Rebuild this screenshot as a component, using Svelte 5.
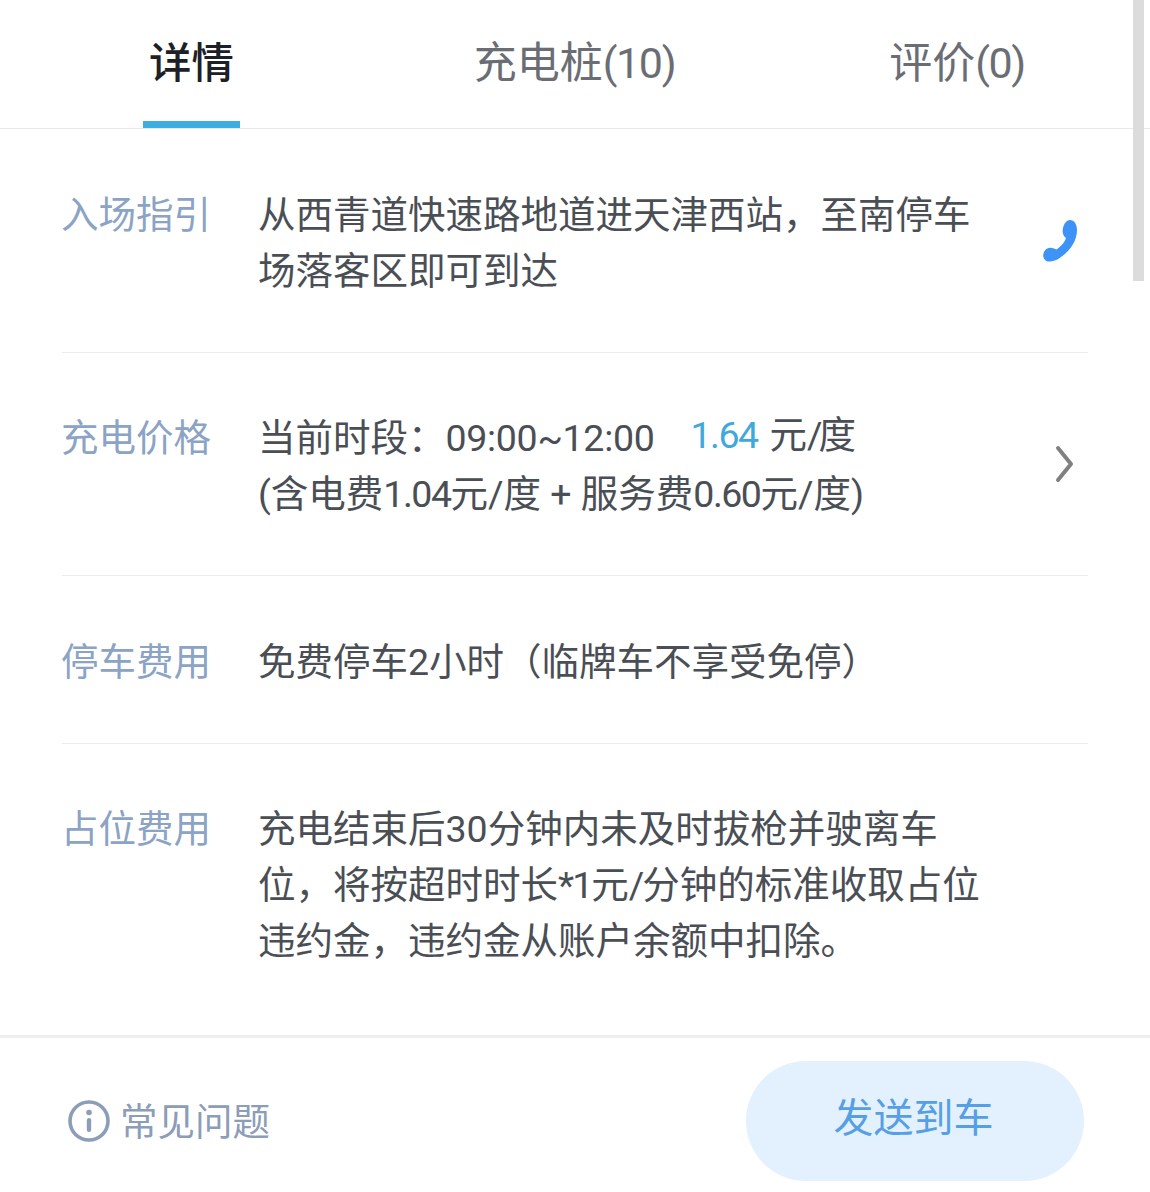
<script>
  const tabs = [
    { label: '详情', active: true },
    { label: '充电桩', count: '(10)' },
    { label: '评价', count: '(0)' }
  ];
</script>

<div class="page">
  <nav class="tabs">
    {#each tabs as t}
      <div class="tab" class:active={t.active}>
        <span>{t.label}{#if t.count}<span class="num">{t.count}</span>{/if}</span>
        {#if t.active}<i class="ink"></i>{/if}
      </div>
    {/each}
  </nav>

  <main class="list">
    <section class="row r1">
      <div class="label">入场指引</div>
      <div class="value">从西青道快速路地道进天津西站，至南停车<br />场落客区即可到达</div>
      <svg class="phone" viewBox="0 0 36 44" width="36" height="44" aria-hidden="true">
        <path d="M28 1 C32 1 35 5 35 11 C35 22 28 32 19 38 C14 42 9 43 6 42.5 C2 42 0 37 2 33 C4 29 8 28 12 29.5 L14.5 30.5 C18 28 22.5 24 24 19 C21 17 20 13 21 9 C22 4 25 1 28 1 Z" fill="#3d94f6" />
      </svg>
    </section>

    <section class="row r2">
      <div class="label">充电价格</div>
      <div class="value">
        <div class="price-line">当前时段：<span class="time">09:00~12:00</span><b class="price">1.64</b><span class="unit">元<span class="slash">/</span>度</span></div>
        <div>(含电费<span class="num">1.04</span>元/度 + 服务费<span class="num">0.60</span>元/度)</div>
      </div>
      <svg class="chev" viewBox="0 0 20 38" width="20" height="38" aria-hidden="true">
        <path d="M4 3 L17 19 L4 35" fill="none" stroke="#808080" stroke-width="4" stroke-linecap="round" stroke-linejoin="round" />
      </svg>
    </section>

    <section class="row r3">
      <div class="label">停车费用</div>
      <div class="value">免费停车2小时（临牌车不享受免停）</div>
    </section>

    <section class="row r4">
      <div class="label">占位费用</div>
      <div class="value">充电结束后30分钟内未及时拔枪并驶离车<br />位，将按超时时长<span class="tight">*1</span>元<span class="tight">/</span>分钟的标准收取占位<br />违约金，违约金从账户余额中扣除。</div>
    </section>
  </main>

  <footer class="foot">
    <div class="faq">
      <svg viewBox="0 0 42 42" width="42" height="42" aria-hidden="true">
        <circle cx="21" cy="21" r="19" fill="none" stroke="#8c9db8" stroke-width="3.6" />
        <circle cx="21" cy="12.5" r="2.8" fill="#8c9db8" />
        <rect x="18.8" y="18" width="4.4" height="14" rx="2.2" fill="#8c9db8" />
      </svg>
      <span class="faq-text">常见问题</span>
    </div>
    <button class="send">发送到车</button>
  </footer>

  <div class="scroll"></div>
</div>

<style>
  :global(body) {
    margin: 0;
    background: #fff;
  }
  .page {
    position: relative;
    width: 1150px;
    height: 1192px;
    overflow: hidden;
    background: #fff;
    font-family: Roboto, "Noto Sans CJK SC", "Noto Sans", sans-serif;
    color: #4a4e55;
  }
  .tabs {
    display: grid;
    grid-template-columns: 383px 383px 382px;
    height: 128px;
    border-bottom: 1px solid #e8e8e8;
  }
  .tab {
    position: relative;
    display: flex;
    align-items: center;
    justify-content: center;
    font-size: 43px;
    color: #6a6e74;
    padding-bottom: 10px;
    box-sizing: border-box;
  }
  .tab .num {
    letter-spacing: -1.4px;
  }
  .tab.active {
    color: #1d2026;
    font-size: 42.4px;
    font-weight: 500;
  }
  .ink {
    position: absolute;
    left: 143px;
    bottom: 0;
    width: 97px;
    height: 7px;
    background: #3badE0;
  }
  .list {
    padding: 0 62px;
  }
  .row {
    position: relative;
    display: flex;
    border-bottom: 1px solid #ececec;
    font-size: 37.5px;
    line-height: 56px;
    width: 1026px;
    box-sizing: border-box;
  }
  .r1 { height: 224px; padding-top: 58px; }
  .r2 { height: 223px; padding-top: 57px; }
  .r3 { height: 168px; padding-top: 58px; }
  .r4 { height: 291px; padding-top: 57px; border-bottom: 0; }
  .label {
    width: 196px;
    flex: none;
    margin-left: -1px;
    margin-right: 1px;
    color: #8ba3c4;
  }
  .value {
    white-space: nowrap;
    color: #4a4e55;
  }
  .num {
    letter-spacing: -1.5px;
  }
  .tight {
    letter-spacing: -2px;
  }
  .time {
    letter-spacing: -0.3px;
  }
  .slash {
    letter-spacing: -4px;
  }
  .price-line {
    display: flex;
    height: 56px;
  }
  .price {
    font-weight: 400;
    color: #3fa9dc;
    margin: -3px 0 0 36px;
    letter-spacing: -1.5px;
  }
  .unit {
    margin: -3px 0 0 12px;
  }
  .phone {
    position: absolute;
    right: 10px;
    top: 90px;
  }
  .chev {
    position: absolute;
    right: 14px;
    top: 92px;
  }
  .foot {
    height: 157px;
    border-top: 3px solid #efefef;
    box-sizing: border-box;
    display: flex;
    align-items: center;
    justify-content: space-between;
    padding: 12px 66px 0 68px;
  }
  .faq {
    display: flex;
    align-items: center;
    gap: 10px;
    font-size: 37.5px;
    color: #8c9db8;
  }
  .faq-text {
    line-height: 42px;
    margin-top: 2px;
  }
  .send {
    width: 338px;
    height: 120px;
    border: 0;
    border-radius: 60px;
    background: #e2f1fd;
    color: #569fe4;
    font-size: 40px;
    font-family: inherit;
    padding: 0 3px 12px 0;
  }
  .scroll {
    position: absolute;
    top: 0;
    left: 1133px;
    width: 11px;
    height: 281px;
    background: #dcdcdc;
  }
</style>
